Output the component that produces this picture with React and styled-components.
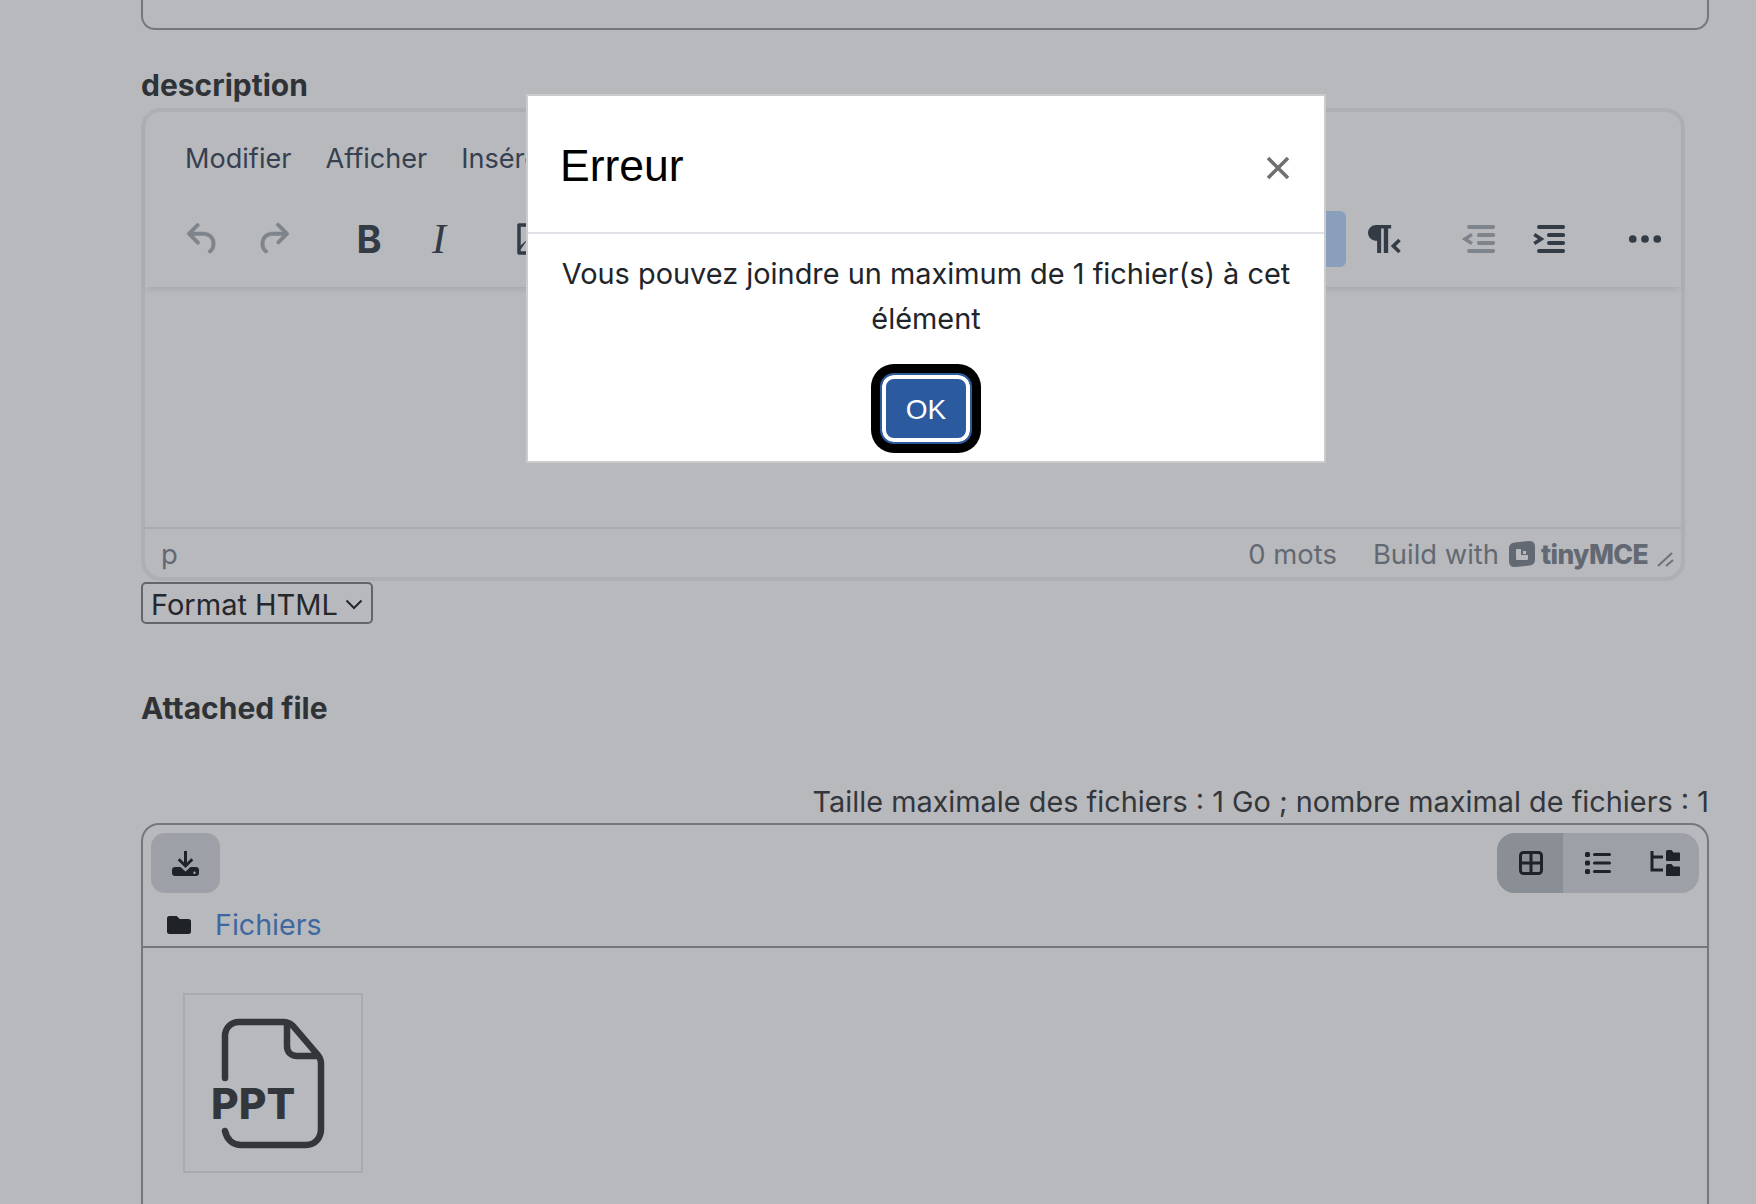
import React from 'react'
import styled, { createGlobalStyle } from 'styled-components'
import { FaFolder } from 'react-icons/fa'

const GlobalStyle = createGlobalStyle`
  html, body {
    margin: 0;
    height: 100%;
    overflow: hidden;
    background: #b8b9bc;
    font-family: Inter, "Noto Sans", sans-serif;
    color: #2f3236;
  }
`

const Page = styled.div`
  width: 1568px;
  margin-left: 141px;
`
const TopBox = styled.div`
  height: 28px;
  border: 2px solid #74787e;
  border-top: 0;
  border-radius: 0 0 14px 14px;
`
const Label = styled.div`
  font-size: 30px;
  font-weight: 700;
  line-height: 40px;
  color: #2f3338;
  margin-top: ${props => props.top}px;
`

const Editor = styled.div`
  width: 1544px;
  height: 473px;
  margin-top: 3px;
  box-sizing: border-box;
  border: 4px solid #aeafb3;
  border-radius: 20px;
  display: flex;
  flex-direction: column;
`
const EditorHeader = styled.div`
  height: 175px;
  box-shadow: 0 4px 6px -2px rgba(40, 44, 52, 0.12);
`
const MenuBar = styled.div`
  height: 81px;
  padding: 11px 0 0 40px;
  box-sizing: border-box;
  display: flex;
  align-items: center;
  gap: 34px;
  font-size: 27.100px;
  color: #364050;
`
const Toolbar = styled.div`
  height: 92px;
  display: flex;
  align-items: center;
  padding: 0 5px 0 27px;
  gap: 33px;
`
const ToolGroup = styled.div`
  display: flex;
  gap: 8px;
  margin-left: ${props => (props.$right ? 'auto' : '0')};
`
const ToolButton = styled.div`
  width: 62px;
  height: 56px;
  display: flex;
  align-items: center;
  justify-content: center;
  border-radius: 6px;
  color: ${props => (props.$off ? '#7e848b' : '#333b47')};
  background: ${props => (props.$active ? '#8a9fbc' : 'transparent')};
`
const BoldGlyph = styled.span`
  font-size: 38px;
  font-weight: 700;
  margin-left: 2px;
`
const ItalicGlyph = styled.span`
  font-family: "Liberation Serif", serif;
  font-style: italic;
  font-size: 42px;
  margin-left: 2px;
`
const EditorBody = styled.div`
  flex: 1;
`
const StatusBar = styled.div`
  height: 50px;
  border-top: 2px solid #a9aaae;
  box-sizing: border-box;
  padding: 2px 7px 0 16px;
  display: flex;
  align-items: center;
  font-size: 27.400px;
  color: #636973;
`
const WordCount = styled.span`
  margin-left: auto;
  margin-right: 36px;
`
const Branding = styled.span`
  display: flex;
  align-items: center;
  gap: 10px;
`
const LogoWord = styled.span`
  font-weight: 800;
  font-size: 26.500px;
  letter-spacing: -0.6px;
  margin-left: -4px;
`
const Resize = styled.svg`
  margin: 10px 0 0 9px;
`

const FormatSelect = styled.div`
  width: 232px;
  height: 42px;
  margin-top: 1px;
  box-sizing: border-box;
  border: 2px solid #62656b;
  border-radius: 5px;
  padding: 2px 8px 0 8px;
  display: flex;
  align-items: center;
  justify-content: space-between;
  font-size: 29px;
  color: #24272b;
`

const FileLimits = styled.div`
  margin-top: 54px;
  text-align: right;
  font-size: 28.850px;
  line-height: 40px;
  color: #33373c;
`
const FileManager = styled.div`
  margin-top: 1px;
  height: 420px;
  box-sizing: border-box;
  border: 2px solid #74787e;
  border-bottom: 0;
  border-radius: 18px 18px 0 0;
`
const FmToolbar = styled.div`
  display: flex;
  justify-content: space-between;
  padding: 8px 8px 0 8px;
`
const FmButton = styled.div`
  width: 69px;
  height: 60px;
  background: #9da0a6;
  border-radius: 14px;
  display: flex;
  align-items: center;
  justify-content: center;
  color: #1f2226;
`
const ViewSwitch = styled.div`
  display: flex;
  border-radius: 18px;
  overflow: hidden;
  background: #9da0a6;
`
const ViewButton = styled.div`
  width: ${props => props.$w}px;
  height: 60px;
  box-sizing: border-box;
  padding-left: ${props => props.$shift || 0}px;
  display: flex;
  align-items: center;
  justify-content: center;
  color: #1f2226;
  background: ${props => (props.$active ? '#8a8e95' : 'transparent')};
`
const PathBar = styled.div`
  height: 55px;
  box-sizing: border-box;
  border-bottom: 2px solid #74787e;
  display: flex;
  align-items: center;
  padding: 10px 0 0 24px;
  gap: 24px;
  color: #1f2226;
  font-size: 22px;
`
const PathLink = styled.span`
  font-size: 28.600px;
  color: #3e68a0;
`
const FileTile = styled.div`
  width: 180px;
  height: 180px;
  margin: 45px 0 0 40px;
  padding-top: 5px;
  box-sizing: border-box;
  border: 2px solid #a9aaae;
  display: flex;
  align-items: center;
  justify-content: center;
`

const Modal = styled.div`
  position: absolute;
  left: 526px;
  top: 94px;
  width: 800px;
  box-sizing: border-box;
  background: #fff;
  border: 2px solid #cbccce;
`
const ModalHeader = styled.div`
  height: 138px;
  box-sizing: border-box;
  border-bottom: 2px solid #dee2e6;
  padding: 0 34px 0 32px;
  display: flex;
  align-items: center;
  justify-content: space-between;
`
const ModalTitle = styled.div`
  font-family: "Liberation Sans", Arial, sans-serif;
  font-size: 44.500px;
  color: #000;
  margin-top: 3px;
`
const CloseIcon = styled.svg`
  margin-top: 8px;
`
const ModalBody = styled.div`
  padding: 17px 30px 17px;
  text-align: center;
  font-size: 28.900px;
  line-height: 45px;
  color: #212529;
`
const OkButton = styled.button`
  display: block;
  width: 92px;
  height: 71px;
  margin: 32px auto 0;
  padding: 2px 0 0;
  border: 2px solid #2b5b9e;
  border-radius: 14px;
  background: #2b5b9e;
  color: #fff;
  font-family: "Liberation Sans", Arial, sans-serif;
  font-size: 28px;
  box-shadow: inset 0 0 0 4px #fff, 0 0 0 9px #000;
`
const IconSvg = styled.svg`
  display: block;
`

const Icon = ({ d, bold }) => (
  <IconSvg width="42" height="42" viewBox="0 0 24 24" fill="currentColor" stroke={bold ? 'currentColor' : 'none'} strokeWidth=".3">
    <path d={d} />
  </IconSvg>
)

// indent / outdent: four bars and a small chevron
const IndentIcon = ({ out }) => (
  <IconSvg width="42" height="42" viewBox="0 0 24 24" fill="currentColor">
    <rect x="4.600" y="4" width="16" height="2.300" rx="1.100" />
    <rect x="10.300" y="8.600" width="10.300" height="2.300" rx="1.100" />
    <rect x="10.300" y="13.100" width="10.300" height="2.300" rx="1.100" />
    <rect x="4.600" y="17.700" width="16" height="2.300" rx="1.100" />
    <path
      d={out ? 'M7.400 9.400 3.400 12l4 2.600' : 'M3 9.400 7 12l-4 2.600'}
      fill="none"
      stroke="currentColor"
      strokeWidth="2"
    />
  </IconSvg>
)

const MoreIcon = () => (
  <IconSvg width="42" height="42" viewBox="0 0 24 24" fill="currentColor">
    <circle cx="5" cy="12" r="2.200" />
    <circle cx="12" cy="12" r="2.200" />
    <circle cx="19" cy="12" r="2.200" />
  </IconSvg>
)

const undo = 'M6.4 8H12c3.7 0 6.2 2 6.8 5.1.6 2.7-.4 5.6-2.3 6.8a1 1 0 0 1-1-1.8c1.1-.6 1.8-2.7 1.4-4.6-.5-2.1-2.1-3.5-4.9-3.5H6.4l3.3 3.3a1 1 0 1 1-1.4 1.4l-5-5a1 1 0 0 1 0-1.4l5-5a1 1 0 0 1 1.4 1.4L6.4 8Z'
const redo = 'M17.6 10H12c-2.8 0-4.4 1.4-4.9 3.5-.4 2 .3 4 1.4 4.6a1 1 0 1 1-1 1.8c-1.9-1.2-2.9-4.1-2.3-6.8C5.8 10 8.3 8 12 8h5.6l-3.3-3.3a1 1 0 1 1 1.4-1.4l5 5a1 1 0 0 1 0 1.4l-5 5a1 1 0 0 1-1.4-1.4l3.3-3.3Z'
const image = 'M5 15.7l2.3-2.2c.3-.3.7-.3 1 0L11 16l5.1-5c.3-.4.8-.4 1 0l2 1.9V5H5v10.7ZM5 18v1h3l2.5-2.5-2.7-2.7L5 18ZM4 3h16c.6 0 1 .4 1 1v16c0 .6-.4 1-1 1H4a1 1 0 0 1-1-1V4c0-.6.4-1 1-1Z'
const rtl = 'M7 4h8.500v2H13.800V20h-2.500V6h-1.500V20H7.500V13C4.500 13 2.300 11 2.300 8.500S4.500 4 7 4ZM21 13.300 18.200 16l2.800 2.700-1.400 1.500-4.300-4.200 4.300-4.200Z'
const ltr = 'M10 4h8.200v2.300H16V20h-3V6h-1V20H9V13C7 13 5 11 5 8.500S7 4 10 4Z'

const TinyLogo = () => (
  <svg width="26" height="26" viewBox="0 0 26 26">
    <path
      fill="#636973"
      d="M6 1.500 20 0c3.500-.3 6 2 6 5v14c0 3-2 5-5 5.500L6 26c-3.500.3-6-2-6-5V7c0-3 2.500-5.200 6-5.500Z"
    />
    <rect x="7" y="8" width="12" height="11" rx="1" fill="#b8b9bc" />
    <rect x="12" y="8" width="7" height="6" fill="#636973" />
    <rect x="14" y="10" width="3" height="3" fill="#b8b9bc" />
  </svg>
)

const App = () => {
  return (
    <>
      <GlobalStyle />
      <Page>
        <TopBox />
        <Label top={35}>description</Label>
        <Editor>
          <EditorHeader>
            <MenuBar>
              <span>Modifier</span>
              <span>Afficher</span>
              <span>Insérer</span>
            </MenuBar>
            <Toolbar>
              <ToolGroup>
                <ToolButton $off><Icon bold d={undo} /></ToolButton>
                <ToolButton $off><Icon bold d={redo} /></ToolButton>
              </ToolGroup>
              <ToolGroup>
                <ToolButton><BoldGlyph>B</BoldGlyph></ToolButton>
                <ToolButton><ItalicGlyph>I</ItalicGlyph></ToolButton>
              </ToolGroup>
              <ToolGroup>
                <ToolButton><Icon d={image} /></ToolButton>
              </ToolGroup>
              <ToolGroup $right>
                <ToolButton $active><Icon d={ltr} /></ToolButton>
                <ToolButton><Icon d={rtl} /></ToolButton>
              </ToolGroup>
              <ToolGroup>
                <ToolButton $off><IndentIcon out /></ToolButton>
                <ToolButton><IndentIcon /></ToolButton>
              </ToolGroup>
              <ToolGroup>
                <ToolButton><MoreIcon /></ToolButton>
              </ToolGroup>
            </Toolbar>
          </EditorHeader>
          <EditorBody />
          <StatusBar>
            <span>p</span>
            <WordCount>0 mots</WordCount>
            <Branding>
              Build with
              <TinyLogo />
              <LogoWord>tinyMCE</LogoWord>
            </Branding>
            <Resize width="17" height="16" viewBox="0 0 17 16" fill="none" stroke="#6d727a" strokeWidth="2">
              <path d="M1 15 15 2M9 15l7-6" />
            </Resize>
          </StatusBar>
        </Editor>
        <FormatSelect>
          Format HTML
          <svg width="18" height="11" viewBox="0 0 18 11" fill="none" stroke="#24272b" strokeWidth="2">
            <path d="m1.500 1.500 7.500 7.500 7.500-7.500" />
          </svg>
        </FormatSelect>
        <Label top={64}>Attached file</Label>
        <FileLimits>Taille maximale des fichiers : 1 Go ; nombre maximal de fichiers : 1</FileLimits>
        <FileManager>
          <FmToolbar>
            <FmButton>
              <svg width="27" height="27" viewBox="0 0 27 27" fill="currentColor">
                <path d="M12 1h3v11.500l4.300-4.300 2 2-7.800 7.800-7.800-7.800 2-2 4.300 4.300Z" />
                <path fillRule="evenodd" d="M3 17h5.500l5 4.500 5-4.500H24c1.700 0 3 1.300 3 3v3c0 1.700-1.300 3-3 3H3c-1.700 0-3-1.300-3-3v-3c0-1.700 1.300-3 3-3Zm19.500 4.500a1.300 1.300 0 1 0 0 2.600 1.300 1.300 0 0 0 0-2.600Z" />
              </svg>
            </FmButton>
            <ViewSwitch>
              <ViewButton $active $w={66} $shift={2}>
                <svg width="24" height="24" viewBox="0 0 24 24" fill="none" stroke="currentColor" strokeWidth="3">
                  <rect x="1.500" y="1.500" width="21" height="21" rx="3" />
                  <path d="M12 2v20M2 12h20" />
                </svg>
              </ViewButton>
              <ViewButton $w={68} $shift={2}>
                <svg width="26" height="22" viewBox="0 0 26 22" fill="currentColor">
                  <rect x="0" y="0" width="5" height="5" rx="1.500" />
                  <rect x="0" y="8.500" width="5" height="5" rx="1.500" />
                  <rect x="0" y="17" width="5" height="5" rx="1.500" />
                  <rect x="8" y="1" width="18" height="3" rx="1.500" />
                  <rect x="8" y="9.500" width="18" height="3" rx="1.500" />
                  <rect x="8" y="18" width="18" height="3" rx="1.500" />
                </svg>
              </ViewButton>
              <ViewButton $w={68}>
                <svg width="30" height="26" viewBox="0 0 30 26" fill="currentColor">
                  <path d="M2 1v19h11M2 7h11" fill="none" stroke="currentColor" strokeWidth="3" />
                  <path d="M16 2c0-1 .6-2 1.500-2h4l2 2.500H29c.6 0 1 .4 1 1V10c0 .6-.4 1-1 1H17c-.6 0-1-.4-1-1Z" />
                  <path d="M16 16c0-1 .6-2 1.500-2h4l2 2.500H29c.6 0 1 .4 1 1V25c0 .6-.4 1-1 1H17c-.6 0-1-.4-1-1Z" />
                </svg>
              </ViewButton>
            </ViewSwitch>
          </FmToolbar>
          <PathBar>
            <FaFolder size={24} />
            <PathLink>Fichiers</PathLink>
          </PathBar>
          <FileTile>
            <svg width="140" height="140" viewBox="0 0 140 140" fill="none">
              <path
                d="M22 62V20C22 12 28 6 36 6H80C84 6 87 7 90 10L114 38C117 41 118 44 118 48V113C118 122 112 129 103 129H38C30 129 24 124 22 115"
                stroke="#33363b"
                strokeWidth="6.500"
                strokeLinecap="round"
              />
              <path d="M84 7V30C84 36 88 40 94 40H116" stroke="#33363b" strokeWidth="6.500" />
              <text x="8" y="103" fill="#33363b" fontFamily="Inter, sans-serif" fontWeight="800" fontSize="42.500">PPT</text>
            </svg>
          </FileTile>
        </FileManager>
      </Page>
      <Modal>
        <ModalHeader>
          <ModalTitle>Erreur</ModalTitle>
          <CloseIcon width="24" height="24" viewBox="0 0 24 24" stroke="#6f6f6f" strokeWidth="3.500">
            <path d="M2 2l20 20M22 2 2 22" />
          </CloseIcon>
        </ModalHeader>
        <ModalBody>
          Vous pouvez joindre un maximum de 1 fichier(s) à cet élément
          <OkButton>OK</OkButton>
        </ModalBody>
      </Modal>
    </>
  )
}

export default App
